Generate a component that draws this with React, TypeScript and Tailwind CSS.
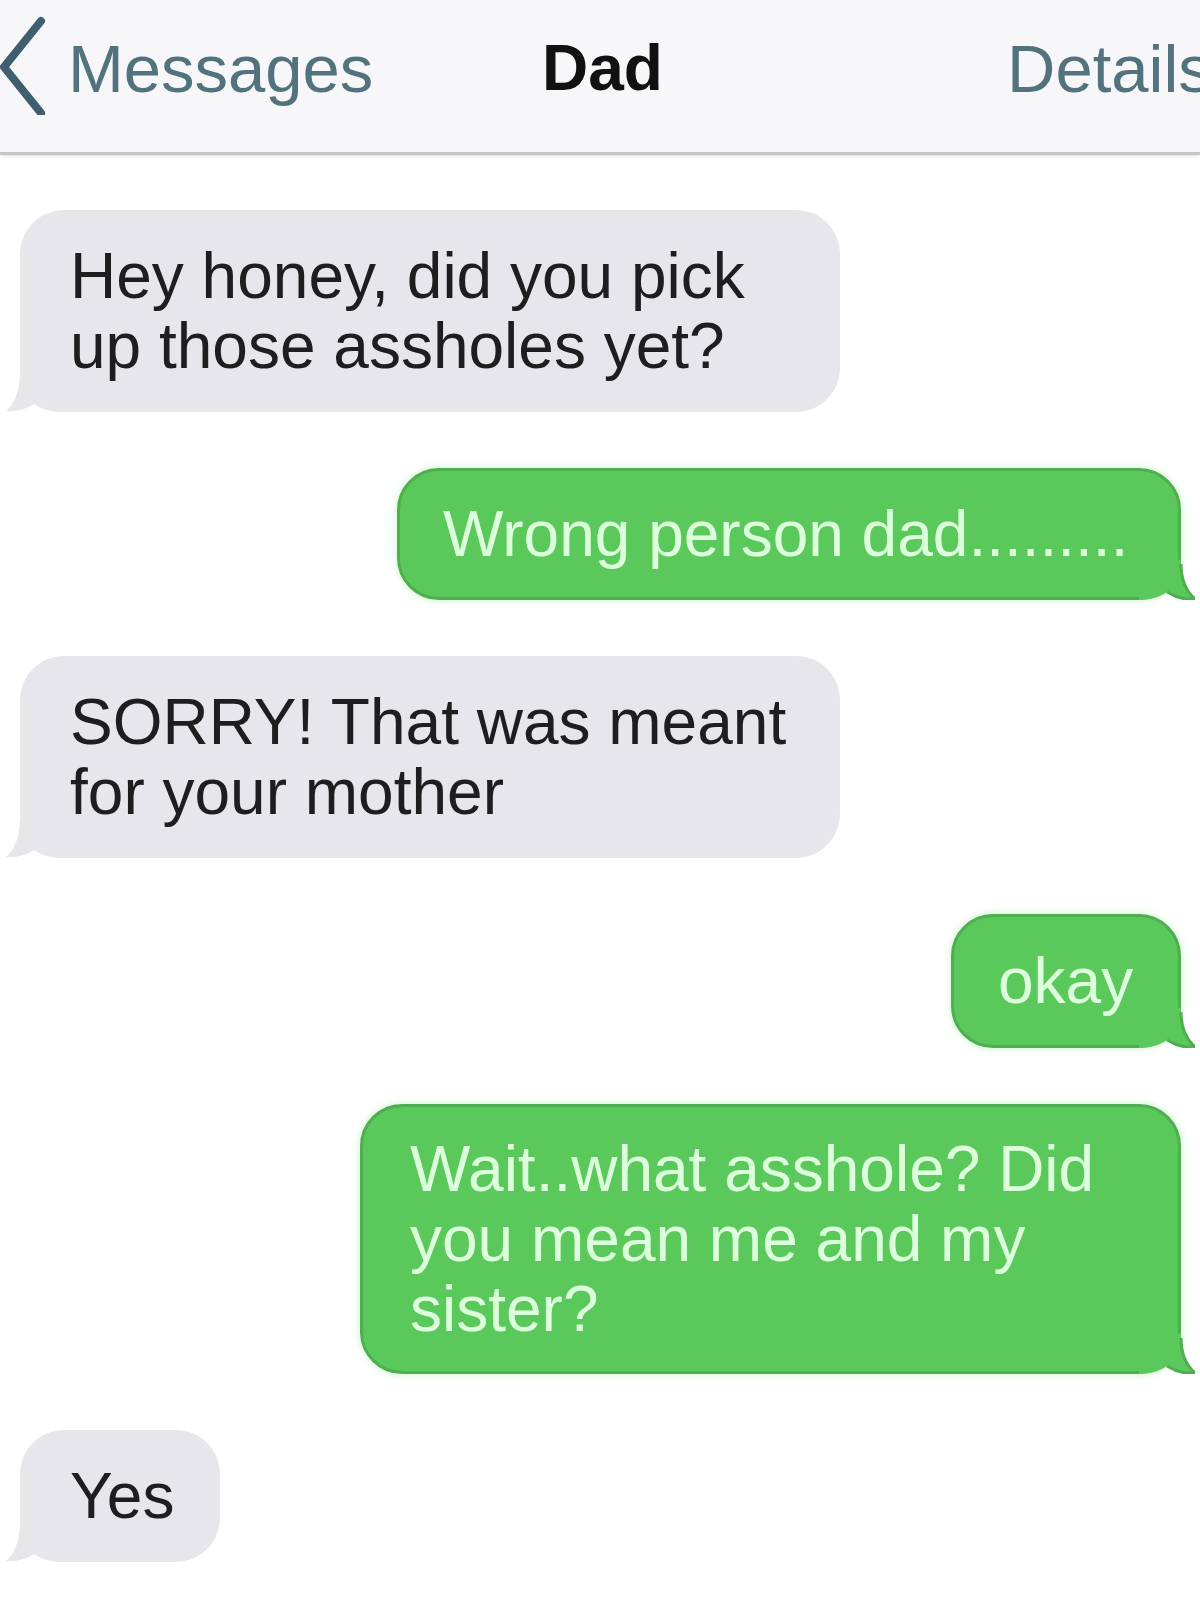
import React from 'react'

const FONT = { fontFamily: '"Liberation Sans", Arial, Helvetica, sans-serif' }

type Msg = {
  from: 'dad' | 'me'
  width: string
  pl: string
  py: string
  lines: string[]
}

const MESSAGES: Msg[] = [
  { from: 'dad', width: 'w-[820px]', pl: 'pl-[50px]', py: 'py-[31px]', lines: ['Hey honey, did you pick', 'up those assholes yet?'] },
  { from: 'me', width: 'w-[784px]', pl: 'pl-[43px]', py: 'py-[28px]', lines: ['Wrong person dad.........'] },
  { from: 'dad', width: 'w-[820px]', pl: 'pl-[50px]', py: 'py-[31px]', lines: ['SORRY! That was meant', 'for your mother'] },
  { from: 'me', width: 'w-[230px]', pl: 'pl-[44px]', py: 'py-[29px]', lines: ['okay'] },
  { from: 'me', width: 'w-[821px]', pl: 'pl-[47px]', py: 'py-[27px]', lines: ['Wait..what asshole? Did', 'you mean me and my', 'sister?'] },
  { from: 'dad', width: 'w-[200px]', pl: 'pl-[50px]', py: 'py-[31px]', lines: ['Yes'] },
]

function Tail({ color, mirrored }: { color: string; mirrored?: boolean }) {
  return (
    <svg
      width="56"
      height="40"
      viewBox="0 0 56 40"
      className={mirrored ? 'absolute right-[-17px] bottom-[-3px] -scale-x-100' : 'absolute left-[-14px] bottom-0'}
    >
      <path d="M14 0 C14 20 8 32 0 39 C10 40 20 37 28 32 C34 36 42 40 56 40 L56 0 Z" fill={color} />
      {mirrored && (
        <path d="M14 4 C14 20 8 32 0 39 C10 40 20 37 28 32" fill="none" stroke="#4fae4f" strokeWidth="3" />
      )}
    </svg>
  )
}

function Bubble({ msg }: { msg: Msg }) {
  const mine = msg.from === 'me'
  return (
    <div className={mine ? 'flex justify-end pr-[19px]' : 'flex justify-start pl-[20px]'}>
      <div
        className={
          mine
            ? `relative ${msg.width} ${msg.pl} ${msg.py} rounded-[42px] border-[3px] border-[#4fae4f] bg-[#5bc85b] text-[#dcffdc] shadow-[0_0_10px_#c9f3c9]`
            : `relative ${msg.width} ${msg.pl} ${msg.py} rounded-[44px] bg-[#e6e6eb] text-[#1e1e1e]`
        }
      >
        {mine ? <Tail color="#5bc85b" mirrored /> : <Tail color="#e6e6eb" />}
        <div className="relative text-[64px] leading-[70px] whitespace-nowrap" style={FONT}>
          {msg.lines.map((line) => (
            <div key={line}>{line}</div>
          ))}
        </div>
      </div>
    </div>
  )
}

export default function App() {
  return (
    <div className="h-[1603px] w-[1200px] overflow-hidden bg-white" style={FONT}>
      <header className="flex h-[155px] items-start border-b-[3px] border-[#c6c6ca] bg-[#f7f7f9] pt-[35px] shadow-[0_1px_3px_#dcdce0]">
        <div className="flex w-[68px] shrink-0 items-start">
          <svg width="50" height="100" viewBox="0 0 50 100" className="-mt-[20px]">
            <polyline
              points="41,6 4,52 41,98"
              fill="none"
              stroke="#3f5f70"
              strokeWidth="8"
              strokeLinecap="round"
              strokeLinejoin="round"
            />
          </svg>
        </div>
        <div className="w-[474px] shrink-0 text-[67px] leading-[67px] text-[#52727d]">Messages</div>
        <div className="w-[465px] shrink-0 text-[64px] font-bold leading-[67px] text-[#111111]">Dad</div>
        <div className="shrink-0 text-[67px] leading-[67px] whitespace-nowrap text-[#52727d]">Details</div>
      </header>

      <main className="flex flex-col gap-[56px] pt-[55px]">
        {MESSAGES.map((m, i) => (
          <Bubble key={i} msg={m} />
        ))}
      </main>
    </div>
  )
}
